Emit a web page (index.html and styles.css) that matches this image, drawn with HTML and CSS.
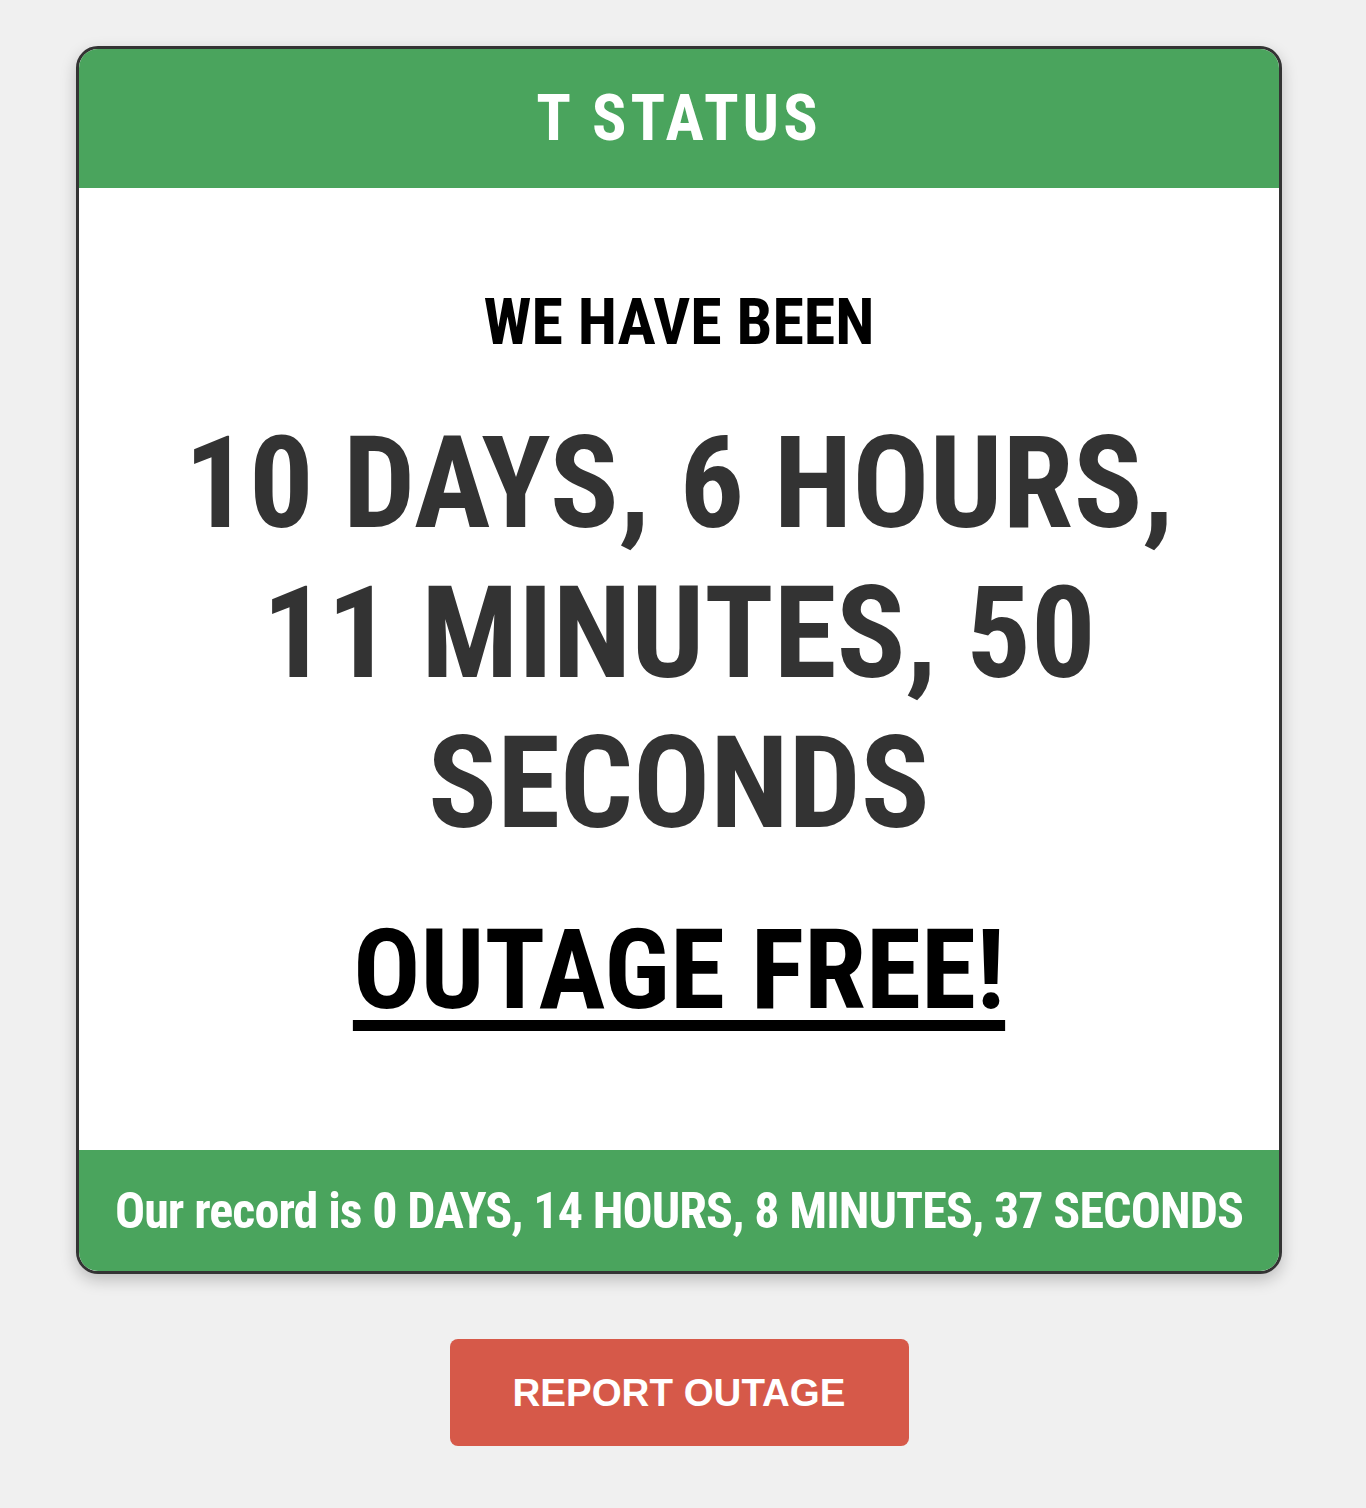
FILE: index.html
```html
<!DOCTYPE html>
<html>
<head>
<meta charset="utf-8">
<link rel="stylesheet" href="styles.css">
</head>
<body>
<div class="page">
  <div class="card">
    <div class="card-head">T STATUS</div>
    <div class="card-body">
      <div class="lead">WE HAVE BEEN</div>
      <div class="count">10 DAYS, 6 HOURS, 11 MINUTES, 50 SECONDS</div>
      <div class="free">OUTAGE FREE!</div>
    </div>
    <div class="card-foot">Our record is 0 DAYS, 14 HOURS, 8 MINUTES, 37 SECONDS</div>
  </div>
  <button class="report">REPORT OUTAGE</button>
</div>
</body>
</html>
```

FILE: styles.css
```css
html, body {
  margin: 0;
  padding: 0;
  background: #f0f0f0;
}
.page {
  display: flex;
  flex-direction: column;
  align-items: center;
  padding-top: 46px;
  padding-right: 8px;
  font-family: "Roboto Condensed", "Roboto", sans-serif;
}
.card {
  width: 1200px;
  border: 3px solid #333;
  border-radius: 22px;
  overflow: hidden;
  background: #fff;
  box-shadow: 0 6px 16px rgba(0,0,0,0.22);
}
.card-head {
  background: #4aa45d;
  color: #fff;
  height: 139px;
  display: flex;
  align-items: center;
  justify-content: center;
  font-weight: 700;
  font-size: 64px;
  letter-spacing: 4px;
}
.card-body {
  text-align: center;
  padding: 97px 60px 116px;
}
.lead { font-size: 64px; font-weight: 700; color: #000; line-height: 75px; }
.count { font-size: 128px; font-weight: 700; color: #333; line-height: 150px; margin-top: 48px; }
.free {
  font-size: 112px;
  font-weight: 700;
  color: #000;
  line-height: 129px;
  margin-top: 47px;
  text-decoration: underline;
  text-decoration-thickness: 11px;
  text-underline-offset: 12px;
}
.card-foot {
  background: #4aa45d;
  color: #fff;
  height: 121px;
  display: flex;
  align-items: center;
  justify-content: center;
  font-weight: 700;
  font-size: 50px;
  letter-spacing: -0.9px;
  white-space: nowrap;
}
.report {
  margin-top: 65px;
  width: 459px;
  height: 107px;
  border: none;
  border-radius: 8px;
  background: #d65949;
  color: #fff;
  font-family: "Liberation Sans", Arial, sans-serif;
  font-weight: 700;
  font-size: 38.5px;
}
```
